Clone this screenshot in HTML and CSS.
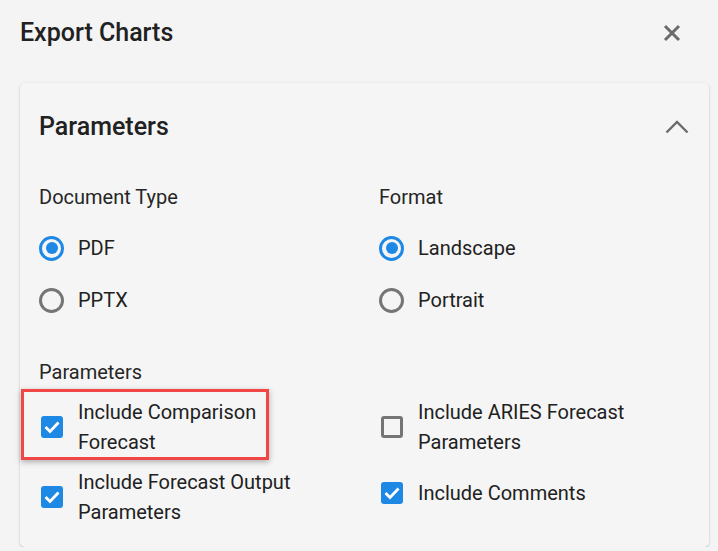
FILE: index.html
```html
<!DOCTYPE html>
<html lang="en">
<head>
    <meta charset="UTF-8">
    <meta name="viewport" content="width=device-width, initial-scale=1.0">
    <title>Export Charts</title>
    <link rel="stylesheet" href="styles.css">
</head>
<body>
    <div class="dialog">
        <header class="dialog-head">
            <h2>Export Charts</h2>
            <button class="icon-btn close-btn" aria-label="Close">
                <svg viewBox="0 0 18 18" width="18" height="18"><path d="M2 2 16 16M16 2 2 16"/></svg>
            </button>
        </header>

        <!-- Parameters panel -->
        <section class="panel">
            <div class="panel-head">
                <h3>Parameters</h3>
                <svg class="chevron" viewBox="0 0 24 14" width="24" height="14"><polyline points="1.5,12.5 12,2 22.5,12.5"/></svg>
            </div>

            <div class="panel-body">
                <div class="two-col">
                    <div class="group">
                        <div class="group-label">Document Type</div>
                        <label class="option"><span class="radio checked"></span>PDF</label>
                        <label class="option"><span class="radio"></span>PPTX</label>
                    </div>
                    <div class="group">
                        <div class="group-label">Format</div>
                        <label class="option"><span class="radio checked"></span>Landscape</label>
                        <label class="option"><span class="radio"></span>Portrait</label>
                    </div>
                </div>

                <div class="group-label params-label">Parameters</div>
                <div class="two-col checks">
                    <label class="check-row highlight">
                        <span class="box checked"><svg viewBox="0 0 22 22"><polyline points="4.5,11 9,15.5 17.5,6.5"/></svg></span>
                        <span class="check-text">Include Comparison Forecast</span>
                    </label>
                    <label class="check-row">
                        <span class="box"></span>
                        <span class="check-text">Include ARIES Forecast Parameters</span>
                    </label>
                    <label class="check-row">
                        <span class="box checked"><svg viewBox="0 0 22 22"><polyline points="4.5,11 9,15.5 17.5,6.5"/></svg></span>
                        <span class="check-text">Include Forecast Output Parameters</span>
                    </label>
                    <label class="check-row single">
                        <span class="box checked"><svg viewBox="0 0 22 22"><polyline points="4.5,11 9,15.5 17.5,6.5"/></svg></span>
                        <span class="check-text">Include Comments</span>
                    </label>
                </div>
            </div>
        </section>
    </div>
</body>
</html>
```

FILE: styles.css
```css
/* Base */
body {
    margin: 0;
    font-family: Roboto, "Liberation Sans", sans-serif;
    color: #212121;
    background-color: #f4f4f4;
}

.dialog {
    padding: 0 9px 0 20px;
}

/* Dialog header */
.dialog-head {
    display: flex;
    align-items: center;
    justify-content: space-between;
    height: 66px;
}

.dialog-head h2 {
    margin: 0;
    font-size: 25px;
    font-weight: 500;
    line-height: 40px;
    color: #212121;
}

.icon-btn {
    border: none;
    background: none;
    padding: 0;
    cursor: pointer;
    display: flex;
}

.close-btn {
    margin-right: 28px;
}

.close-btn svg {
    fill: none;
    stroke: #6b6b6b;
    stroke-width: 3;
}

/* Panel */
.panel {
    margin-top: 17px;
    background-color: #f5f5f5;
    border-radius: 5px;
    box-shadow: 0 1px 3px rgba(0, 0, 0, 0.18), 0 1px 1px rgba(0, 0, 0, 0.06);
    padding: 0 20px 20px 19px;
}

.panel-head {
    display: flex;
    align-items: center;
    justify-content: space-between;
    height: 88px;
}

.panel-head h3 {
    margin: 0;
    font-size: 25px;
    font-weight: 500;
    line-height: 40px;
}

.chevron {
    fill: none;
    stroke: #6b6b6b;
    stroke-width: 2.4;
}

.panel-body {
    padding-top: 11px;
}

.two-col {
    display: grid;
    grid-template-columns: 340px 1fr;
}

.group-label {
    font-size: 20px;
    line-height: 30px;
    color: #262626;
    margin-bottom: 10px;
}

.params-label {
    margin-top: 31px;
    margin-bottom: 10px;
}

/* Radios */
.option {
    display: flex;
    align-items: center;
    height: 52px;
    font-size: 20px;
    cursor: pointer;
}

.radio {
    box-sizing: border-box;
    width: 25px;
    height: 25px;
    border: 3px solid #757575;
    border-radius: 50%;
    margin-right: 14px;
    position: relative;
}

.radio.checked {
    border-color: #1e88e5;
}

.radio.checked::after {
    content: "";
    position: absolute;
    top: 3.5px;
    left: 3.5px;
    width: 12px;
    height: 12px;
    border-radius: 50%;
    background-color: #1e88e5;
}

/* Checkboxes */
.checks {
    row-gap: 10px;
}

.check-row {
    display: flex;
    align-items: center;
    font-size: 20px;
    line-height: 30px;
    cursor: pointer;
    position: relative;
}

.check-row.single {
    margin-top: -8px;
}

.box {
    box-sizing: border-box;
    flex: none;
    width: 22px;
    height: 22px;
    margin: 0 15px 0 2px;
    border: 3px solid #757575;
    border-radius: 3px;
    display: flex;
    align-items: center;
    justify-content: center;
}

.box.checked {
    border: none;
    background-color: #1e88e5;
}

.box svg {
    width: 22px;
    height: 22px;
    fill: none;
    stroke: #fff;
    stroke-width: 2.8;
}

.check-text {
    max-width: 225px;
}

/* Red callout around the first option */
.highlight::after {
    content: "";
    position: absolute;
    top: -8px;
    left: -18px;
    width: 248px;
    height: 71px;
    box-sizing: border-box;
    border: 3px solid #f04646;
    box-shadow: 0 2px 6px rgba(0, 0, 0, 0.3);
    pointer-events: none;
}
```
